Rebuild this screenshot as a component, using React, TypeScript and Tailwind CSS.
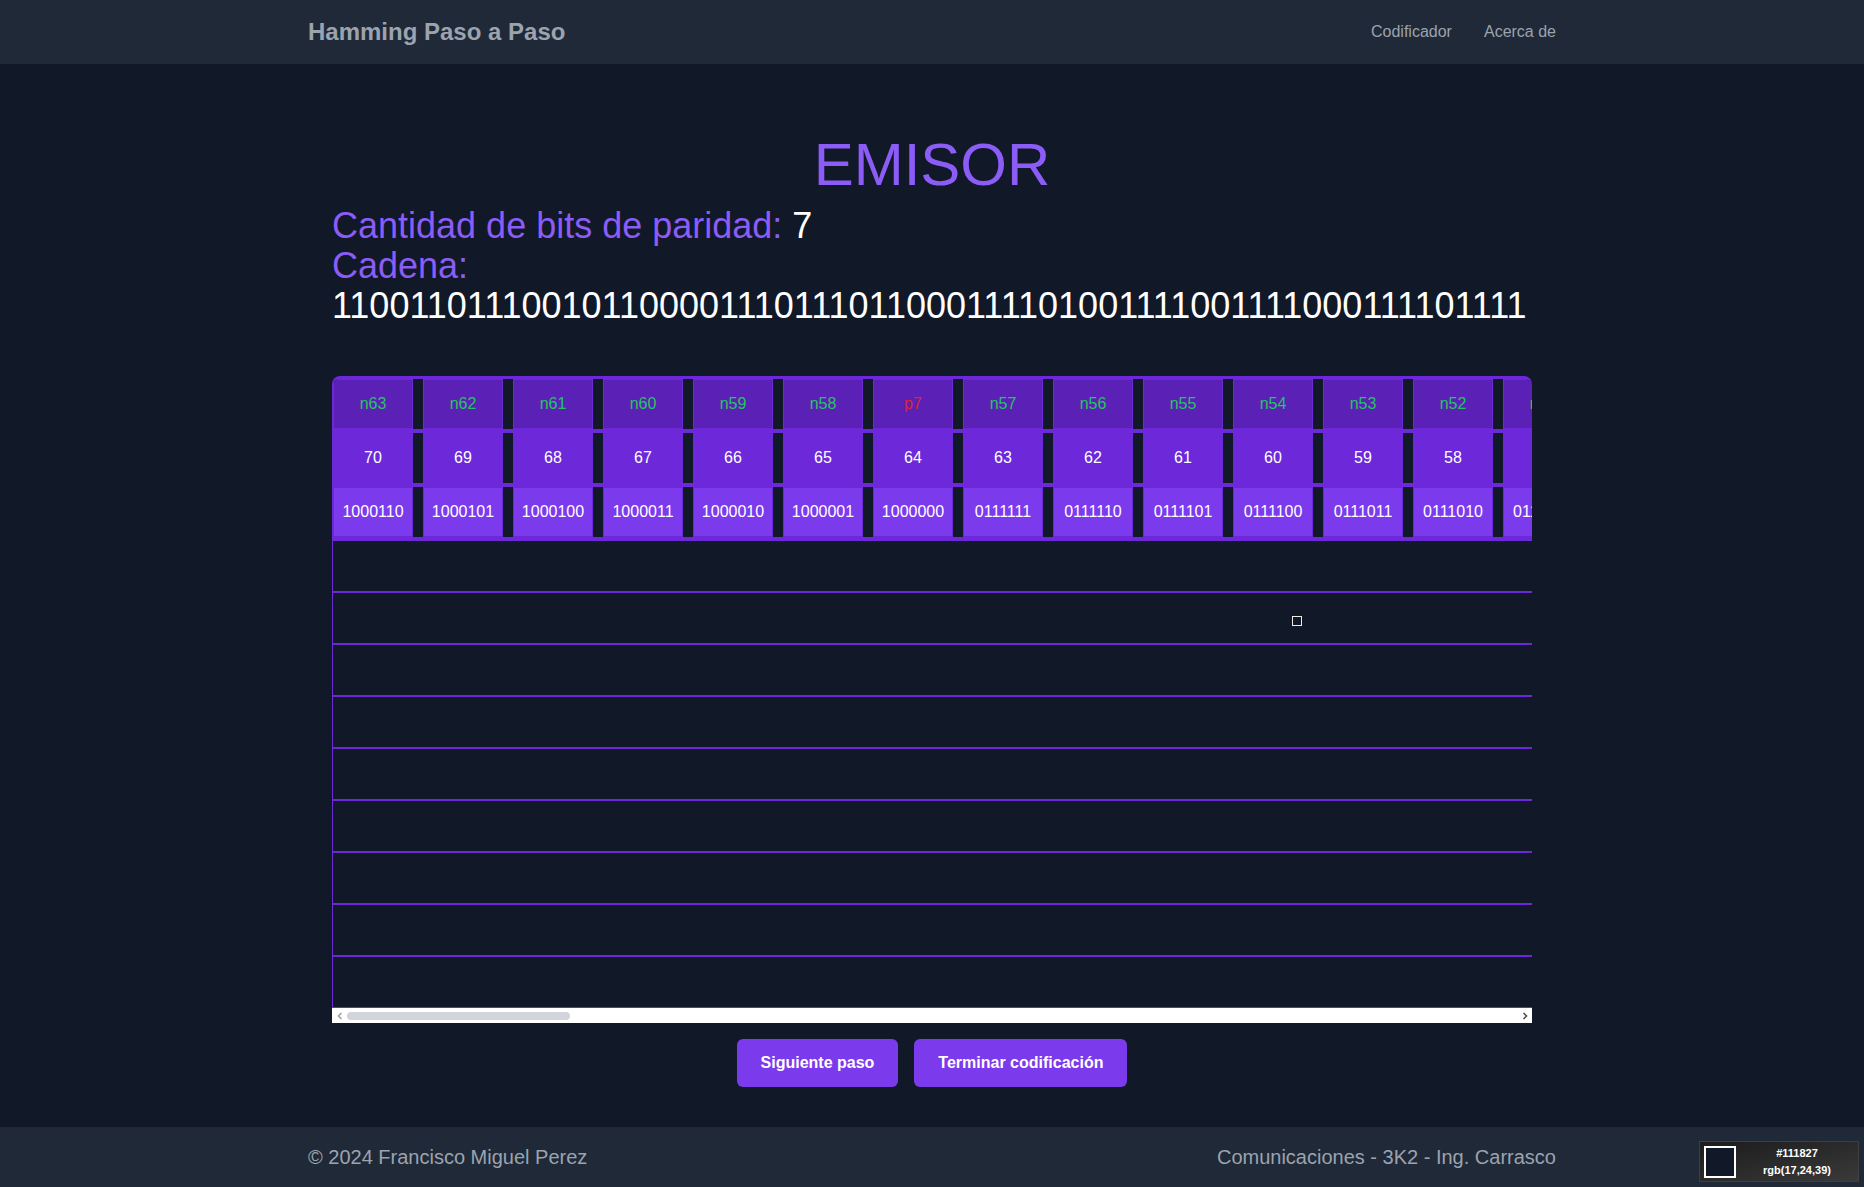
import React from "react";

const BITS = "110011011100101100001110111011000111101001111001111000111101111";

type Col = { pos: number; label: string; parity: boolean; bin: string };

const COLS: Col[] = Array.from({ length: 70 }, (_, k) => 70 - k).map((i) => {
  const parity = (i & (i - 1)) === 0;
  const lg = Math.floor(Math.log2(i));
  const label = parity ? `p${lg + 1}` : `n${i - lg - 1}`;
  return { pos: i, label, parity, bin: i.toString(2).padStart(7, "0") };
});

function HeaderRows() {
  return (
    <>
      <div className="flex w-max gap-[10px] border-b-4 border-[#6d28d9]">
        {COLS.map((c) => (
          <div
            key={"l" + c.pos}
            className={
              "flex h-[50px] w-[80px] shrink-0 items-center justify-center border border-[#6d28d9] bg-[#5b21b6] text-base " +
              (c.parity ? "text-[#dc2626]" : "text-[#22c55e]")
            }
          >
            {c.label}
          </div>
        ))}
      </div>
      <div className="flex w-max gap-[10px] border-b-4 border-[#6d28d9]">
        {COLS.map((c) => (
          <div
            key={"p" + c.pos}
            className="flex h-[50px] w-[80px] shrink-0 items-center justify-center border border-[#6d28d9] bg-[#6d28d9] text-base text-white"
          >
            {c.pos}
          </div>
        ))}
      </div>
      <div className="flex w-max gap-[10px] border-b-4 border-[#6d28d9]">
        {COLS.map((c) => (
          <div
            key={"b" + c.pos}
            className="flex h-[50px] w-[80px] shrink-0 items-center justify-center border border-[#6d28d9] bg-[#7c3aed] text-base text-white"
          >
            {c.bin}
          </div>
        ))}
      </div>
    </>
  );
}

function Scrollbar() {
  return (
    <div className="flex h-[15px] w-full items-center bg-white">
      <div className="flex w-[15px] shrink-0 items-center justify-center">
        <svg width="6" height="8" viewBox="0 0 6 8">
          <polyline points="4.5,1 1.5,4 4.5,7" fill="none" stroke="#a3a3a3" strokeWidth="1.6" />
        </svg>
      </div>
      <div className="flex flex-1 items-center">
        <div className="h-[8px] w-[223px] rounded-full bg-[#d1d5db]" />
      </div>
      <div className="flex w-[15px] shrink-0 items-center justify-center">
        <svg width="6" height="8" viewBox="0 0 6 8">
          <polyline points="1.5,1 4.5,4 1.5,7" fill="none" stroke="#505050" strokeWidth="1.6" />
        </svg>
      </div>
    </div>
  );
}

export default function App() {
  return (
    <div className="relative flex min-h-screen flex-col bg-[#111827] font-['Liberation_Sans',Arial,sans-serif]">
      <header className="bg-[#1f2937]">
        <div className="mx-auto flex max-w-7xl items-center justify-between px-4 py-4">
          <span className="text-2xl font-bold text-[#9ca3af]">Hamming Paso a Paso</span>
          <nav className="flex gap-8 text-base text-[#9ca3af]">
            <a>Codificador</a>
            <a>Acerca de</a>
          </nav>
        </div>
      </header>

      <main className="flex-1">
        <div className="mx-auto max-w-7xl px-4 pb-10 pt-[71px]">
          <h1 className="text-center text-6xl leading-none text-[#8b5cf6]">EMISOR</h1>
          <div className="mx-6 mt-[11px]">
            <div className="text-4xl text-[#8b5cf6]">
              Cantidad de bits de paridad: <span className="text-white">7</span>
            </div>
            <div className="text-4xl text-[#8b5cf6]">Cadena:</div>
            <div className="whitespace-nowrap text-4xl text-white">{BITS}</div>

            <div className="mt-[50px]">
              <div className="overflow-hidden rounded-t-lg border-l border-t-[3px] border-[#6d28d9]">
                <HeaderRows />
                {Array.from({ length: 9 }).map((_, r) => (
                  <div
                    key={r}
                    className={
                      "w-[6300px] border-[#6d28d9] " +
                      (r === 8 ? "h-[51px] border-b" : "h-[52px] border-b-2")
                    }
                  />
                ))}
              </div>
              <Scrollbar />
            </div>
          </div>

          <div className="mt-4 flex justify-center gap-4">
            <button className="rounded-md bg-[#7c3aed] px-6 py-3 text-base font-bold text-white">
              Siguiente paso
            </button>
            <button className="rounded-md bg-[#7c3aed] px-6 py-3 text-base font-bold text-white">
              Terminar codificación
            </button>
          </div>
        </div>
      </main>

      <footer className="bg-[#1f2937]">
        <div className="mx-auto flex max-w-7xl items-center justify-between px-4 py-4 text-xl text-[#9ca3af]">
          <span>© 2024 Francisco Miguel Perez</span>
          <span>Comunicaciones - 3K2 - Ing. Carrasco</span>
        </div>
      </footer>

      <div className="absolute left-[1292px] top-[616px] h-[10px] w-[10px] border border-[#f0ebe0]" />

      <div className="absolute bottom-[5px] right-[5px] flex h-[41px] w-[160px] items-center border border-[#3f3f3f] bg-gradient-to-br from-[#1c1c1c] to-[#3a3a3a] pl-[4px]">
        <div className="h-[32px] w-[32px] border-2 border-white bg-[#111827]" />
        <div className="flex-1 text-center text-[11px] font-bold leading-[17px] text-white">
          <div>#111827</div>
          <div>rgb(17,24,39)</div>
        </div>
      </div>
    </div>
  );
}
